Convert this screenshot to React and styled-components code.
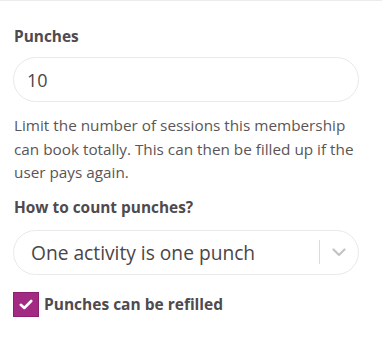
import React, { useState } from 'react';
import styled, { createGlobalStyle } from 'styled-components';

const GlobalStyle = createGlobalStyle`
  html, body {
    margin: 0;
    padding: 0;
    background: #fff;
  }
  body {
    font-family: 'Open Sans', 'Noto Sans', sans-serif;
    color: #4f4a4d;
  }
  * { box-sizing: border-box; }
`;

const Panel = styled.div`
  width: 382px;
  height: 350px;
  border-top: 1px solid #ececec;
  padding: 26px 23px 0 13px;
  display: flex;
  flex-direction: column;
`;

const Label = styled.label`
  display: block;
  font-size: 15.4px;
  font-weight: 700;
  color: #4f4a4d;
  margin: ${(p) => p.$top || 0}px 0 0 1px;
  line-height: 20px;
`;

const Field = styled.div`
  margin-top: ${(p) => p.$top || 0}px;
  height: 45px;
  border: 1px solid #e9e9e9;
  border-radius: 23px;
  display: flex;
  align-items: center;
  background: #fff;
`;

const Input = styled.input`
  flex: 1;
  border: none;
  outline: none;
  background: transparent;
  font-family: inherit;
  font-size: 18px;
  color: #4a4547;
  padding: 0 0 0 13px;
  height: 100%;
`;

const Help = styled.p`
  margin: 12px 0 0 1px;
  font-size: 15.3px;
  line-height: 23.5px;
  color: #5a5557;
`;

const SelectValue = styled.span`
  flex: 1;
  font-size: 19.2px;
  color: #4a4547;
  padding-left: 17px;
`;

const Divider = styled.span`
  width: 1px;
  height: 24px;
  background: #dcdcdc;
`;

const Chevron = styled.span`
  width: 38px;
  display: flex;
  justify-content: center;
  align-items: center;
  color: #c4c4c4;
`;

const CheckRow = styled.label`
  margin-top: 17px;
  display: flex;
  align-items: center;
  gap: 5px;
  cursor: pointer;
`;

const Box = styled.span`
  width: 26px;
  height: 25px;
  background: ${(p) => (p.$on ? '#a32a83' : '#fff')};
  border: 1px solid ${(p) => (p.$on ? '#8e1f70' : '#ccc')};
  display: flex;
  align-items: center;
  justify-content: center;
`;

const CheckText = styled.span`
  font-size: 15.5px;
  font-weight: 700;
  color: #4f4a4d;
`;

export default function App() {
  const [value, setValue] = useState('10');
  const [refill, setRefill] = useState(true);
  return (
    <>
      <GlobalStyle />
      <Panel>
        <Label>Punches</Label>
        <Field $top={10}>
          <Input value={value} onChange={(e) => setValue(e.target.value)} />
        </Field>
        <Help>
          Limit the number of sessions this membership can book totally. This can then be
          filled up if the user pays again.
        </Help>
        <Label $top={13}>How to count punches?</Label>
        <Field $top={12}>
          <SelectValue>One activity is one punch</SelectValue>
          <Divider />
          <Chevron>
            <svg width="14" height="9" viewBox="0 0 14 9" fill="none">
              <path d="M1.5 1.5 L7 7 L12.5 1.5" stroke="currentColor" strokeWidth="2.2" strokeLinecap="round" strokeLinejoin="round" />
            </svg>
          </Chevron>
        </Field>
        <CheckRow onClick={() => setRefill(!refill)}>
          <Box $on={refill}>
            {refill && (
              <svg width="14" height="11" viewBox="0 0 14 11" fill="none">
                <path d="M1.8 5.8 L5.3 9 L12.2 2" stroke="#fff" strokeWidth="2.6" strokeLinecap="round" strokeLinejoin="round" />
              </svg>
            )}
          </Box>
          <CheckText>Punches can be refilled</CheckText>
        </CheckRow>
      </Panel>
    </>
  );
}
